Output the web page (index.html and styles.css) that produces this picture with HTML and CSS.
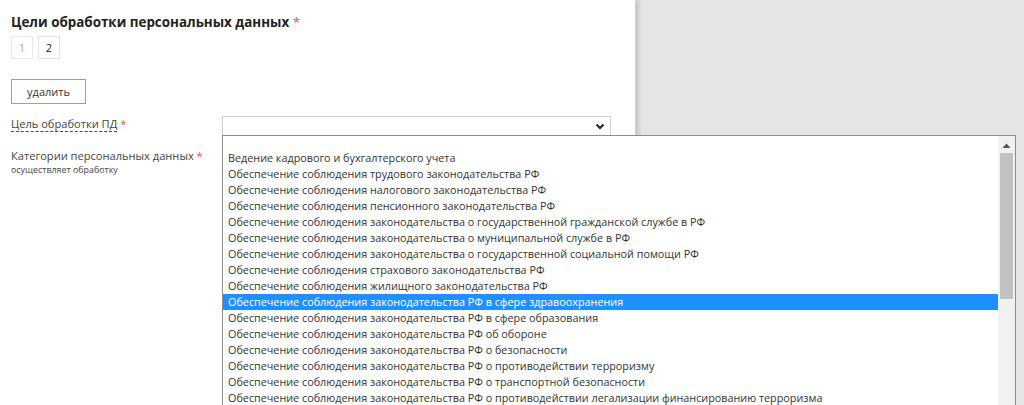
FILE: index.html
```html
<!DOCTYPE html>
<html lang="ru">
<head>
<meta charset="utf-8">
<title>Цели обработки персональных данных</title>
<link rel="stylesheet" href="styles.css">
</head>
<body>
<div class="page">
  <div class="panel">
    <h2 class="title">Цели обработки персональных данных <span class="req">*</span></h2>
    <div class="pager">
      <span class="pg pg-active">1</span>
      <span class="pg">2</span>
    </div>
    <button class="btn-del" type="button">удалить</button>
    <div class="row row-goal">
      <div class="label"><span class="dashed">Цель обработки ПД</span> <span class="req">*</span></div>
      <div class="select">
        <svg class="chev" width="10" height="7" viewBox="0 0 10 7"><polyline points="1.5,1.5 5,5 8.5,1.5" fill="none" stroke="#222" stroke-width="2"/></svg>
      </div>
    </div>
    <div class="row row-cat">
      <div class="label">Категории персональных данных <span class="req">*</span>
        <div class="sub">осуществляет обработку</div>
      </div>
    </div>
  </div>
  <div class="listbox">
    <div class="options">
      <div class="opt opt-empty"></div>
      <div class="opt">Ведение кадрового и бухгалтерского учета</div>
      <div class="opt">Обеспечение соблюдения трудового законодательства РФ</div>
      <div class="opt">Обеспечение соблюдения налогового законодательства РФ</div>
      <div class="opt">Обеспечение соблюдения пенсионного законодательства РФ</div>
      <div class="opt">Обеспечение соблюдения законодательства о государственной гражданской службе в РФ</div>
      <div class="opt">Обеспечение соблюдения законодательства о муниципальной службе в РФ</div>
      <div class="opt">Обеспечение соблюдения законодательства о государственной социальной помощи РФ</div>
      <div class="opt">Обеспечение соблюдения страхового законодательства РФ</div>
      <div class="opt">Обеспечение соблюдения жилищного законодательства РФ</div>
      <div class="opt opt-sel">Обеспечение соблюдения законодательства РФ в сфере здравоохранения</div>
      <div class="opt">Обеспечение соблюдения законодательства РФ в сфере образования</div>
      <div class="opt">Обеспечение соблюдения законодательства РФ об обороне</div>
      <div class="opt">Обеспечение соблюдения законодательства РФ о безопасности</div>
      <div class="opt">Обеспечение соблюдения законодательства РФ о противодействии терроризму</div>
      <div class="opt">Обеспечение соблюдения законодательства РФ о транспортной безопасности</div>
      <div class="opt">Обеспечение соблюдения законодательства РФ о противодействии легализации финансированию терроризма</div>
    </div>
    <div class="scrollbar">
      <svg class="arrow" width="9" height="5" viewBox="0 0 9 5"><polygon points="0.5,5 4.5,0.5 8.5,5" fill="#555"/></svg>
      <div class="thumb"></div>
    </div>
  </div>
</div>
</body>
</html>
```
FILE: styles.css
```css
* { box-sizing: border-box; }
html, body { margin: 0; padding: 0; }
body {
  background: #e5e5e5;
  font-family: "Open Sans", "Liberation Sans", sans-serif;
  color: #333;
  width: 1024px;
  height: 405px;
  overflow: hidden;
}
.page { position: relative; height: 405px; }
.panel {
  width: 636px;
  height: 405px;
  background: #fff;
  padding: 13px 0 0 11px;
  box-shadow: 2px 0 5px rgba(0,0,0,0.18);
  border-right: 1px solid #d0d0d0;
}
.title {
  margin: 0;
  font-size: 13.4px;
  font-weight: 700;
  line-height: 19px;
  color: #222;
}
.req { color: #e0584f; font-weight: 400; }
.pager { display: flex; gap: 5px; margin-top: 4px; }
.pg {
  width: 22px;
  height: 23px;
  border: 1px solid #e2e2e2;
  font-size: 11px;
  line-height: 21px;
  text-align: center;
  color: #222;
}
.pg-active { color: #7fb5a5; border-color: #e8e8e8; }
.btn-del {
  display: block;
  margin-top: 20px;
  width: 75px;
  height: 25px;
  border: 1px solid #cf8a8a;
  background: #fff;
  font-family: "Open Sans", "Liberation Sans", sans-serif;
  font-size: 11px;
  color: #333;
  padding: 0;
}
.row { display: flex; }
.row-goal { margin-top: 12px; height: 19px; align-items: stretch; }
.label {
  width: 211px;
  font-size: 11.1px;
  color: #444;
  line-height: 16px;
}
.dashed { border-bottom: 1px dashed #444; }
.select {
  width: 389px;
  height: 20px;
  border: 1px solid #cfcfcf;
  display: flex;
  justify-content: flex-end;
  align-items: center;
  padding-right: 5px;
}
.row-cat { margin-top: 13px; }
.sub { font-size: 8.9px; line-height: 12px; color: #444; margin-top: 0; }
.listbox {
  position: absolute;
  left: 222px;
  top: 135px;
  width: 794px;
  height: 290px;
  background: #fff;
  border: 1px solid #8c8c8c;
  display: flex;
  font-size: 10.8px;
  color: #333;
}
.options { flex: 1; overflow: hidden; }
.opt {
  height: 16px;
  line-height: 16px;
  padding-left: 5px;
  white-space: nowrap;
}
.opt-empty { height: 14px; }
.opt-sel { background: #1e90ff; color: #fff; }
.scrollbar {
  width: 17px;
  background: #f1f1f1;
  position: relative;
  padding: 7px 2px 0 2px;
  display: flex;
  flex-direction: column;
  align-items: center;
}
.arrow { display: block; }
.thumb {
  margin-top: 5px;
  width: 13px;
  height: 146px;
  background: #c1c1c1;
}
```
